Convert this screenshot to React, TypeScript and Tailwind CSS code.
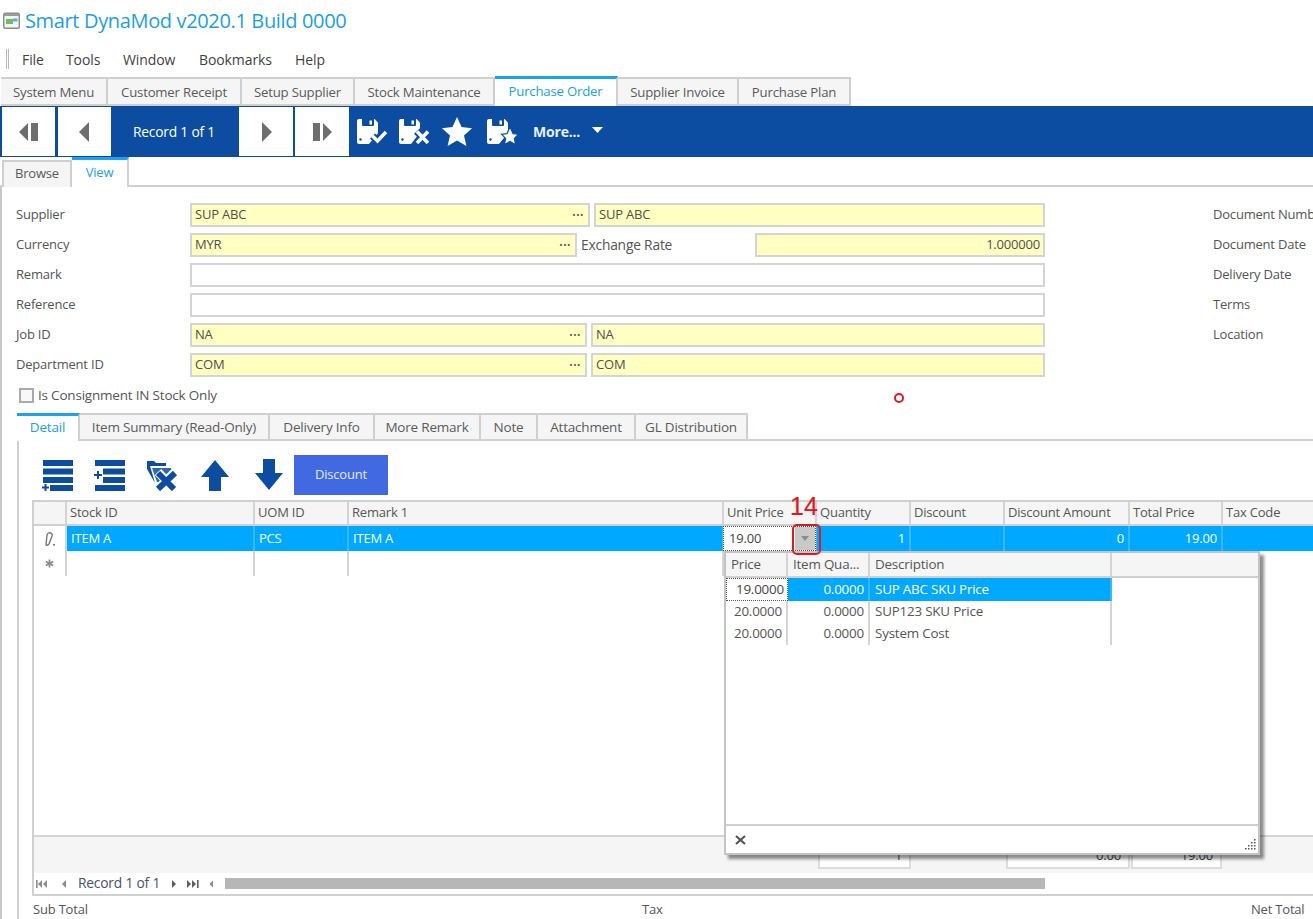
import React from "react";

const font = '"Open Sans", "Noto Sans", "Liberation Sans", sans-serif';

function TabItem({ label, w, active, h = 29 }: { label: string; w: number; active?: boolean; h?: number }) {
  return active ? (
    <div
      style={{ width: w, height: h + 1 }}
      className="relative -mt-px z-10 flex items-center justify-center bg-white border-t-[3px] border-t-[#1aa3f0] border-r-2 border-r-[#d0d0d0] text-[#1a9fe8] pb-[1px] shrink-0"
    >
      {label}
    </div>
  ) : (
    <div
      style={{ width: w, height: h }}
      className="flex items-center justify-center bg-[#f5f5f5] border-t-2 border-r-2 border-b-2 border-[#cfcfcf] shrink-0 text-[#5a5a5a] pt-[2px]"
    >
      {label}
    </div>
  );
}

function Field({ text, w, dots, plain, right }: { text?: string; w?: number; dots?: boolean; plain?: boolean; right?: boolean }) {
  return (
    <div
      style={w ? { width: w } : undefined}
      className={`h-6 border-2 border-[#d4d4d4] flex items-center px-[3px] shrink-0 text-[#4f4f4f] ${plain ? "bg-white" : "bg-[#ffffc2]"} ${right ? "justify-end" : "justify-between"}`}
    >
      <span>{text}</span>
      {dots && <span className="text-[#555] text-[9px] leading-none tracking-[0.5px] pr-[1px] pb-[2px]">•••</span>}
    </div>
  );
}

function Row({ label, right, children }: { label: string; right?: string; children: React.ReactNode }) {
  return (
    <div className="flex items-center h-6">
      <div className="w-[188px] pl-[14px] shrink-0 text-[#555]">{label}</div>
      <div className="flex w-[855px] shrink-0 items-center">{children}</div>
      {right && <div className="ml-[168px] whitespace-nowrap text-[#555]">{right}</div>}
    </div>
  );
}

function NavBtn({ w, children }: { w: number; children: React.ReactNode }) {
  return (
    <div style={{ width: w }} className="h-[49px] bg-white flex items-center justify-center shrink-0">
      {children}
    </div>
  );
}

function Disk({ badge }: { badge: "check" | "x" | "star" }) {
  return (
    <svg width="31" height="27" viewBox="0 0 31 27">
      <path d="M0 3 a2 2 0 0 1 2-2 H17.5 L21 4.5 V15 L12 26 H2 a2 2 0 0 1 -2-2 Z" fill="#fff" />
      <path d="M5 1 H17 V7 a1 1 0 0 1-1 1 H6 a1 1 0 0 1-1-1 Z" fill="#0c4da2" />
      <rect x="12.5" y="2.5" width="2.5" height="4" fill="#fff" />
      <circle cx="3.5" cy="21.5" r="1.2" fill="#0c4da2" />
      {badge === "check" && <path d="M15.5 18 L20.5 23 L29 14" fill="none" stroke="#0c4da2" strokeWidth="7" />}
      {badge === "check" && <path d="M15.5 18 L20.5 23 L29 14" fill="none" stroke="#fff" strokeWidth="3.4" />}
      {badge === "x" && <path d="M18 13 L29 25 M29 13 L18 25" stroke="#0c4da2" strokeWidth="8" />}
      {badge === "x" && <path d="M18 13.5 L29 25 M29 13.5 L18 25" stroke="#fff" strokeWidth="3.6" />}
      {badge === "star" && (
        <path
          d="M23 9 L26 15.6 L31.5 16.2 L27.4 20.4 L28.6 26.8 L23 23.4 L17.4 26.8 L18.6 20.4 L14.5 16.2 L20 15.6 Z"
          fill="#fff"
          stroke="#0c4da2"
          strokeWidth="1.2"
        />
      )}
    </svg>
  );
}

const B = "#0c4da2";
const cols = "grid grid-cols-[33px_188px_94px_375px_93px_94px_94px_125px_93px_100px]";
const headers = ["", "Stock ID", "UOM ID", "Remark 1", "Unit Price", "Quantity", "Discount", "Discount Amount", "Total Price", "Tax Code"];

export default function App() {
  return (
    <div
      style={{ fontFamily: font }}
      className="relative w-[1313px] h-[919px] overflow-hidden bg-white text-[13px] tracking-[-0.2px] text-[#555]"
    >
      {/* title */}
      <div className="h-[43px] flex items-center pl-[3px] pb-[2px]">
        <svg width="18" height="18" viewBox="0 0 18 18" className="mr-[4px]">
          <rect x="0.7" y="1.2" width="15.6" height="15" rx="1.5" fill="#f4f4f4" stroke="#8a8a8a" strokeWidth="1.4" />
          <rect x="1" y="1.5" width="15" height="2.5" fill="#9a9a9a" />
          <rect x="3" y="7" width="7" height="5" fill="#6cbf63" />
          <rect x="10" y="6.5" width="4.5" height="3" fill="#6aa8dc" />
        </svg>
        <span className="text-[20px] tracking-[-0.35px] text-[#1a9fe8]">Smart DynaMod v2020.1 Build 0000</span>
      </div>

      {/* menu */}
      <div className="h-[34px] flex items-center pl-[6px] pb-[2px] text-[#3f3f3f] text-[14px] tracking-[-0.1px]">
        <div className="w-[3px] h-[20px] border-x border-[#b8b8b8] mr-[13px]" />
        <span className="w-[44px]">File</span>
        <span className="w-[57px]">Tools</span>
        <span className="w-[76px]">Window</span>
        <span className="w-[96px]">Bookmarks</span>
        <span>Help</span>
      </div>

      {/* module tabs */}
      <div className="h-[29px] flex pl-[1px] text-[13.2px]">
        <TabItem label="System Menu" w={107} />
        <TabItem label="Customer Receipt" w={134} />
        <TabItem label="Setup Supplier" w={113} />
        <TabItem label="Stock Maintenance" w={140} />
        <TabItem label="Purchase Order" w={123} active />
        <TabItem label="Supplier Invoice" w={121} />
        <TabItem label="Purchase Plan" w={112} />
      </div>

      {/* toolbar */}
      <div className="h-[51px] bg-[#0c4da2] flex items-center pl-[2px]">
        <NavBtn w={53}>
          <svg width="22" height="20" viewBox="0 0 22 20">
            <path d="M10 1 V19 L1 10 Z" fill="#6e6e6e" />
            <rect x="13" y="1" width="7" height="18" fill="#6e6e6e" />
          </svg>
        </NavBtn>
        <div className="w-[3px]" />
        <NavBtn w={53}>
          <svg width="14" height="20" viewBox="0 0 14 20">
            <path d="M11 0 V20 L1 10 Z" fill="#6e6e6e" />
          </svg>
        </NavBtn>
        <div className="w-[128px] text-center text-white text-[13.8px] pt-[1px] pr-[2px]">Record 1 of 1</div>
        <NavBtn w={54}>
          <svg width="14" height="20" viewBox="0 0 14 20">
            <path d="M3 0 V20 L13 10 Z" fill="#6e6e6e" />
          </svg>
        </NavBtn>
        <div className="w-[2px]" />
        <NavBtn w={54}>
          <svg width="22" height="20" viewBox="0 0 22 20">
            <rect x="2" y="1" width="7" height="18" fill="#6e6e6e" />
            <path d="M12 1 V19 L21 10 Z" fill="#6e6e6e" />
          </svg>
        </NavBtn>
        <div className="ml-[8px] flex items-center">
          <Disk badge="check" />
          <div className="w-[11px]" />
          <Disk badge="x" />
          <div className="w-[11px]" />
          <svg width="32" height="32" viewBox="0 0 32 32">
            <path d="M16 1 L20.5 11 L31 12.2 L23 19.4 L25.4 30 L16 24.6 L6.6 30 L9 19.4 L1 12.2 L11.5 11 Z" fill="#fff" />
          </svg>
          <div className="w-[14px]" />
          <Disk badge="star" />
          <span className="ml-[15px] font-bold text-[14px] text-[#e8f0fa]">More...</span>
          <svg width="11" height="6" viewBox="0 0 11 6" className="ml-[12px] -mt-[3px]">
            <path d="M0 0 H11 L5.5 6 Z" fill="#fff" />
          </svg>
        </div>
      </div>

      {/* browse/view tabs */}
      <div className="h-[30px] flex pl-[2px] border-b-2 border-[#d0d0d0] relative">
        <div className="mt-[3px] w-[70px] h-[27px] flex items-center justify-center bg-[#f5f5f5] border-t-2 border-x-2 border-[#cfcfcf] text-[#5a5a5a] pb-[1px]">
          Browse
        </div>
        <div className="w-[57px] h-[30px] bg-white border-t-[3px] border-t-[#1aa3f0] border-r-2 border-r-[#d0d0d0] flex items-center justify-center text-[#1a9fe8] pb-[2px] z-10">
          View
        </div>
      </div>

      {/* body */}
      <div className="border-l-2 border-[#c8c8c8] h-[732px]">
        <div className="pt-[16px] flex flex-col gap-[6px]">
          <Row label="Supplier" right="Document Number">
            <Field text="SUP ABC" w={400} dots />
            <div className="w-[4px]" />
            <Field text="SUP ABC" w={451} />
          </Row>
          <Row label="Currency" right="Document Date">
            <Field text="MYR" w={387} dots />
            <div className="w-[178px] pl-[4px] text-[#555] text-[13.8px] shrink-0">Exchange Rate</div>
            <Field text="1.000000" w={290} right />
          </Row>
          <Row label="Remark" right="Delivery Date">
            <Field w={855} plain />
          </Row>
          <Row label="Reference" right="Terms">
            <Field w={855} plain />
          </Row>
          <Row label="Job ID" right="Location">
            <Field text="NA" w={397} dots />
            <div className="w-[4px]" />
            <Field text="NA" w={454} />
          </Row>
          <Row label="Department ID">
            <Field text="COM" w={397} dots />
            <div className="w-[4px]" />
            <Field text="COM" w={454} />
          </Row>
        </div>

        <div className="mt-[10px] h-[17px] flex items-center pl-[17px]">
          <div className="w-[15px] h-[15px] border-2 border-[#aaa] bg-[#f8f8f8]" />
          <span className="ml-[4px] text-[13.5px]">Is Consignment IN Stock Only</span>
        </div>

        {/* detail tabs */}
        <div className="mt-[9px] ml-[15px] h-[28px] flex border-b-2 border-[#d0d0d0] relative text-[13.5px]">
          <div className="w-[63px] h-[28px] bg-white border-t-[3px] border-t-[#1aa3f0] border-r-2 border-r-[#d0d0d0] flex items-center justify-center text-[#1a9fe8] pb-[3px] z-10">
            Detail
          </div>
          {[
            ["Item Summary (Read-Only)", 190],
            ["Delivery Info", 105],
            ["More Remark", 106],
            ["Note", 57],
            ["Attachment", 98],
            ["GL Distribution", 112],
          ].map(([l, w]) => (
            <div
              key={l as string}
              style={{ width: w as number }}
              className="h-[26px] flex items-center justify-center bg-[#f5f5f5] border-t-2 border-r-2 border-[#cfcfcf] text-[#5a5a5a] whitespace-nowrap"
            >
              {l}
            </div>
          ))}
        </div>

        <div className="ml-[15px] border-l-2 border-[#d0d0d0] h-[478px] pl-[13px]">
          {/* grid toolbar */}
          <div className="h-[59px] flex items-center pl-[10px] pt-[9px]">
            <svg width="31" height="32" viewBox="0 0 31 32">
              <g fill={B}>
                <rect x="1" y="1" width="30" height="6" />
                <rect x="1" y="9.5" width="30" height="6" />
                <rect x="1" y="18" width="30" height="6" />
                <rect x="8" y="26" width="23" height="6" />
                <path d="M2.5 25 H4.5 V27.5 H7 V29.5 H4.5 V32 H2.5 V29.5 H0 V27.5 H2.5 Z" />
              </g>
            </svg>
            <div className="w-[21px]" />
            <svg width="31" height="32" viewBox="0 0 31 32">
              <g fill={B}>
                <rect x="1" y="1" width="30" height="6" />
                <rect x="9" y="9.5" width="22" height="6" />
                <rect x="9" y="18" width="22" height="6" />
                <rect x="1" y="26" width="30" height="6" />
                <path d="M3 12 H5 V15 H8 V17 H5 V20 H3 V17 H0 V15 H3 Z" />
              </g>
            </svg>
            <div className="w-[21px]" />
            <svg width="33" height="32" viewBox="0 0 33 32">
              <path d="M1 2 H8 L10 4 H20 V7 H4 L9 24 L1 10 Z" fill={B} />
              <path d="M6 9 H25 L28 14 L22 20 L16 15 L12 19 L15 23 L11 23 Z" fill={B} opacity="0.85" />
              <path d="M12 13 L28 30 M29 13 L12 30" stroke="#fff" strokeWidth="9" />
              <path d="M12 14 L28 30 M29 14 L12 30" stroke={B} strokeWidth="6" />
            </svg>
            <div className="w-[21px]" />
            <svg width="30" height="32" viewBox="0 0 30 32">
              <path d="M15 1 L29 18 H21 V32 H9 V18 H1 Z" fill={B} />
            </svg>
            <div className="w-[24px]" />
            <svg width="30" height="32" viewBox="0 0 30 32">
              <path d="M15 31 L29 14 H21 V0 H9 V14 H1 Z" fill={B} />
            </svg>
            <div className="ml-[10px] w-[94px] h-[40px] bg-[#4169e1] text-[#e4e9fb] flex items-center justify-center">
              Discount
            </div>
          </div>

          {/* grid */}
          <div className="w-[1400px] h-[396px] border-2 border-[#d0d0d0] border-r-0 flex flex-col">
            <div className={`${cols} h-[24px] bg-[#f5f5f5] border-b-2 border-[#d0d0d0] shrink-0 text-[#555]`}>
              {headers.map((h, i) => (
                <div key={i} className="border-r-2 border-[#d4d4d4] flex items-center pl-[3px] whitespace-nowrap">
                  {h}
                </div>
              ))}
            </div>
            <div className={`${cols} h-[25px] shrink-0 text-white`}>
              <div className="flex items-center justify-center bg-white border-r-2 border-[#d4d4d4]">
                <svg width="12" height="14" viewBox="0 0 12 14">
                  <path d="M2 13 L3 3 Q4 0 6.5 1 Q9 2 8 4 L5 12 Q3 14 2 13 Z" fill="none" stroke="#777" strokeWidth="1.4" />
                  <rect x="9" y="12" width="2" height="1.5" fill="#777" />
                </svg>
              </div>
              {["ITEM A", "PCS", "ITEM A", "", "1", "", "0", "19.00", ""].map((t, i) => (
                <div
                  key={i}
                  className={`bg-[#00a8ff] border-r-2 border-[#39b9fa] flex items-center px-[4px] ${i >= 4 && i < 8 ? "justify-end" : ""}`}
                >
                  {t}
                </div>
              ))}
            </div>
            <div className={`${cols} h-[25px] shrink-0`}>
              <div className="border-r-2 border-[#d4d4d4] flex items-center justify-center">
                <svg width="9" height="9" viewBox="0 0 11 11" stroke="#8a8a8a" strokeWidth="2.2">
                  <path d="M5.5 0.5 V10.5 M1 3 L10 8 M10 3 L1 8" />
                </svg>
              </div>
              {Array.from({ length: 9 }).map((_, i) => (
                <div key={i} className="border-r-2 border-[#d4d4d4]" />
              ))}
            </div>
            <div className="h-[259px] shrink-0" />
            {/* footer summary */}
            <div className={`${cols} h-[38px] bg-[#f5f5f5] border-t-2 border-[#d4d4d4] shrink-0`}>
              <div />
              <div />
              <div />
              <div />
              <div />
              <div className="ml-[1px] mt-[5px] h-[27px] border-2 border-[#dcdcdc] bg-white flex items-center justify-end px-[7px] text-[#445]">1</div>
              <div />
              <div className="ml-[1px] mt-[5px] h-[27px] border-2 border-[#dcdcdc] bg-white flex items-center justify-end px-[7px] text-[#445]">0.00</div>
              <div className="ml-[1px] mr-[1px] mt-[5px] h-[27px] border-2 border-[#dcdcdc] bg-white flex items-center justify-end px-[7px] text-[#445]">19.00</div>
              <div />
            </div>
            {/* navigator */}
            <div className="h-[21px] flex items-center bg-white shrink-0 text-[13.8px] text-[#4a5068]">
              <svg width="44" height="10" viewBox="0 0 44 10" className="ml-[2px]" fill="#8c8c8c">
                <rect x="0" y="1" width="1.6" height="8" />
                <path d="M6 1 V9 L2 5 Z M11 1 V9 L7 5 Z" />
                <path d="M30 1 V9 L26 5 Z" />
              </svg>
              <span className="-ml-[2px] w-[94px] whitespace-nowrap">Record 1 of 1</span>
              <svg width="46" height="10" viewBox="0 0 46 10" fill="#5f5f5f" className="-ml-[2px]">
                <path d="M2 1 V9 L6 5 Z" />
                <path d="M17 1 V9 L21 5 Z M22 1 V9 L26 5 Z" />
                <rect x="27" y="1" width="1.6" height="8" />
                <path d="M43 1.5 V8.5 L39.5 5 Z" fill="#8c8c8c" />
              </svg>
              <div className="w-[820px] h-[11px] bg-[#b7b7b7] ml-[9px]" />
            </div>
          </div>

          {/* totals */}
          <div className="h-[24px] flex items-center pl-[1px] pt-[3px]">
            <span className="w-[609px] shrink-0">Sub Total</span>
            <span className="w-[609px] shrink-0">Tax</span>
            <span>Net Total</span>
          </div>
        </div>
      </div>

      {/* active editor cell in the grid */}
      <div className="absolute left-[723px] top-[526px] w-[93px] h-[25px] bg-white border border-dotted border-[#555] flex items-center pl-[5px] text-[#444]">
        19.00
        <div className="absolute right-0 top-0 w-[20px] h-[23px] bg-[#c9c9c9] flex items-center justify-center">
          <svg width="8" height="5" viewBox="0 0 8 5">
            <path d="M0 0 H8 L4 5 Z" fill="#8c8c8c" />
          </svg>
        </div>
      </div>

      {/* dropdown popup */}
      <div className="absolute left-[724px] top-[551px] w-[536px] h-[304px] bg-white border-2 border-[#c4c4c4] shadow-[4px_4px_3px_rgba(0,0,0,0.45)] flex flex-col text-[13.4px]">
        <div className="grid grid-cols-[62px_82px_242px_1fr] h-[25px] bg-[#f5f5f5] border-b-2 border-[#d0d0d0] shrink-0">
          {["Price", "Item Qua...", "Description", ""].map((h, i) => (
            <div key={i} className={`flex items-center pl-[5px] pb-[1px] whitespace-nowrap ${i < 3 ? "border-r-2 border-[#d4d4d4]" : ""}`}>
              {h}
            </div>
          ))}
        </div>
        <div className="grid grid-cols-[62px_82px_242px] w-[386px] h-[67px] shrink-0 grid-rows-[23px_21px_23px]">
          <div className="bg-white border border-dotted border-[#555] flex items-center justify-end pr-[3px] text-[#444]">19.0000</div>
          <div className="bg-[#00a8ff] text-white flex items-center justify-end pr-[4px] border-r-2 border-[#39b9fa]">0.0000</div>
          <div className="bg-[#00a8ff] text-white flex items-center pl-[5px] border-r-2 border-[#39b9fa]">SUP ABC SKU Price</div>
          <div className="flex items-center justify-end pr-[4px] border-r-2 border-[#d4d4d4]">20.0000</div>
          <div className="flex items-center justify-end pr-[4px] border-r-2 border-[#d4d4d4]">0.0000</div>
          <div className="flex items-center pl-[5px] border-r-2 border-[#d4d4d4]">SUP123 SKU Price</div>
          <div className="flex items-center justify-end pr-[4px] border-r-2 border-[#d4d4d4]">20.0000</div>
          <div className="flex items-center justify-end pr-[4px] border-r-2 border-[#d4d4d4]">0.0000</div>
          <div className="flex items-center pl-[5px] border-r-2 border-[#d4d4d4]">System Cost</div>
        </div>
        <div className="flex-1" />
        <div className="h-[29px] border-t-2 border-[#d0d0d0] flex items-center pl-[9px] relative shrink-0">
          <svg width="11" height="10" viewBox="0 0 11 10">
            <path d="M1 1 L10 9 M10 1 L1 9" stroke="#555" strokeWidth="2.2" />
          </svg>
          <svg width="14" height="14" viewBox="0 0 14 14" className="absolute right-[1px] bottom-[1px]" fill="#555">
            <rect x="11" y="1" width="1.5" height="1.5" />
            <rect x="8" y="4" width="1.5" height="1.5" />
            <rect x="11" y="4" width="1.5" height="1.5" />
            <rect x="5" y="7" width="1.5" height="1.5" />
            <rect x="8" y="7" width="1.5" height="1.5" />
            <rect x="11" y="7" width="1.5" height="1.5" />
            <rect x="2" y="10" width="1.5" height="1.5" />
            <rect x="5" y="10" width="1.5" height="1.5" />
            <rect x="8" y="10" width="1.5" height="1.5" />
            <rect x="11" y="10" width="1.5" height="1.5" />
          </svg>
        </div>
      </div>

      {/* annotations */}
      <div
        style={{ fontFamily: '"Liberation Sans", sans-serif' }}
        className="absolute left-[790px] top-[491px] text-[25px] leading-[30px] tracking-normal text-[#e3181f] [-webkit-text-stroke:0.2px_#e3181f]"
      >
        14
      </div>
      <div className="absolute left-[792px] top-[524px] w-[29px] h-[31px] border-2 border-[#e3181f] rounded-[5px]" />
      <div className="absolute left-[894px] top-[393px] w-[10px] h-[10px] rounded-full border-2 border-[#e3181f]" />
    </div>
  );
}
